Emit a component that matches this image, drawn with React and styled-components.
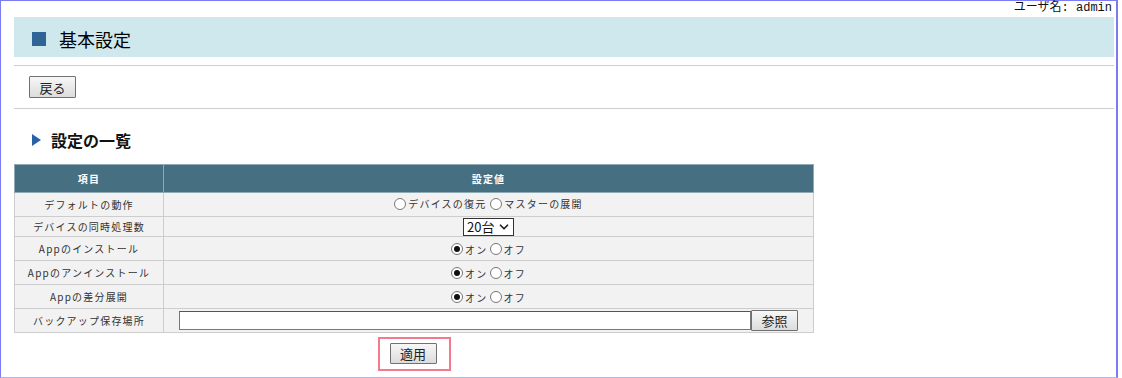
import styled, { createGlobalStyle } from "styled-components";
import { ChevronDown } from "lucide-react";

const GlobalStyle = createGlobalStyle`
  body {
    margin: 0;
    background: #fff;
    font-family: "Noto Sans CJK JP", "Noto Sans", sans-serif;
    color: #222;
  }
`;

const Frame = styled.div`
  box-sizing: border-box;
  width: 1118px;
  height: 378px;
  border-top: 1px solid #7b7bf3;
  border-left: 1px solid #7b7bf3;
  border-right: 2px solid #7b7bf3;
  border-bottom: 1px solid #b4b4f8;
  padding: 0 2px 0 13px;
`;

const UserBar = styled.div`
  height: 16px;
  text-align: right;
  padding-right: 2px;
  font-family: "Liberation Mono", "Noto Sans CJK JP", monospace;
  font-size: 12px;
  line-height: 14px;
  color: #111;
`;

const PageHeader = styled.div`
  height: 40px;
  background: #cfe8ee;
  display: flex;
  align-items: center;
  gap: 13px;
  padding-left: 18px;
  margin-bottom: 8px;
`;

const Square = styled.span`
  width: 14px;
  height: 14px;
  background: #2f6497;
  margin-top: 3px;
`;

const PageTitle = styled.h1`
  margin: 0;
  font-size: 18px;
  font-weight: normal;
  color: #000;
  line-height: 20px;
  margin-top: 4px;
`;

const Rule = styled.hr`
  margin: 0;
  border: 0;
  border-top: 1px solid #cfcfcf;
`;

const BackRow = styled.div`
  padding: 10px 0 10px 15px;
  display: flex;
`;

const Button = styled.button`
  box-sizing: border-box;
  width: 47px;
  height: ${(p) => p.$h || 22}px;
  padding: 0;
  border: 1px solid #707070;
  border-radius: 1px;
  background: linear-gradient(#f7f7f7, #dcdcdc);
  font-family: "Noto Sans CJK JP", sans-serif;
  font-size: 13px;
  line-height: 1;
  color: #222;
`;

const SectionTitle = styled.h2`
  display: flex;
  align-items: center;
  gap: 10px;
  margin: 21px 0 14px 18px;
  height: 20px;
  font-size: 16px;
  font-weight: bold;
  color: #111;
`;

const Triangle = styled.span`
  width: 0;
  height: 0;
  border-top: 6px solid transparent;
  border-bottom: 6px solid transparent;
  border-left: 9px solid #2a62a8;
`;

const Table = styled.table`
  width: 800px;
  border-collapse: collapse;
  font-size: 10px;
  letter-spacing: 1.2px;
  color: #333;
`;

const HeadCell = styled.th`
  height: 27px;
  padding: 0;
  background: #476f82;
  color: #fff;
  font-weight: bold;
  border: 1px solid #8fa9b5;
  width: ${(p) => p.$w || "auto"};
`;

const Row = styled.tr`
  height: ${(p) => p.$h}px;
`;

const Cell = styled.td`
  padding: 0;
  background: #f2f2f2;
  border: 1px solid #cdcdcd;
  text-align: center;
`;

const Options = styled.div`
  display: inline-flex;
  align-items: center;
  gap: ${(p) => p.$gap || 2}px;
`;

const OptionLabel = styled.label`
  display: inline-flex;
  align-items: center;
  gap: 2px;
`;

const Radio = styled.input.attrs({ type: "radio" })`
  appearance: none;
  box-sizing: border-box;
  width: 12px;
  height: 12px;
  margin: 0;
  border: 1px solid #777;
  border-radius: 50%;
  background: #fff;
  display: grid;
  place-items: center;
  &:checked::after {
    content: "";
    width: 6px;
    height: 6px;
    border-radius: 50%;
    background: #111;
  }
`;

const SelectBox = styled.div`
  position: relative;
  display: inline-block;
  vertical-align: middle;
`;

const Select = styled.select`
  appearance: none;
  box-sizing: border-box;
  width: 51px;
  height: 18px;
  margin: 0;
  padding: 0 0 0 3px;
  border: 1px solid #333;
  border-radius: 0;
  background: #fff;
  font-family: "Noto Sans CJK JP", sans-serif;
  font-size: 13px;
  line-height: 16px;
  color: #111;
  letter-spacing: 0;
`;

const SelectIcon = styled(ChevronDown)`
  position: absolute;
  right: 3px;
  top: 2px;
  pointer-events: none;
`;

const PathRow = styled.div`
  display: flex;
  align-items: center;
  padding: 0 15px;
`;

const PathInput = styled.input`
  flex: 1;
  box-sizing: border-box;
  height: 19px;
  margin: 0;
  border: 1px solid #777;
  border-top-color: #555;
  background: #fff;
`;

const ApplyRow = styled.div`
  width: 800px;
  display: flex;
  justify-content: center;
  padding-top: 4px;
`;

const Highlight = styled.div`
  border: 2px solid #f27a8c;
  padding: 4px 12px 5px 10px;
  display: flex;
`;

const OnOff = ({ name }) => (
  <Options>
    <OptionLabel>
      <Radio defaultChecked name={name} />
      オン
    </OptionLabel>
    <OptionLabel>
      <Radio name={name} />
      オフ
    </OptionLabel>
  </Options>
);

export default function App() {
  return (
    <>
      <GlobalStyle />
      <Frame>
        <UserBar>ユーザ名: admin</UserBar>
        <PageHeader>
          <Square />
          <PageTitle>基本設定</PageTitle>
        </PageHeader>
        <Rule />
        <BackRow>
          <Button>戻る</Button>
        </BackRow>
        <Rule />
        <SectionTitle>
          <Triangle />
          設定の一覧
        </SectionTitle>
        <Table>
          <thead>
            <tr>
              <HeadCell $w="148px">項目</HeadCell>
              <HeadCell>設定値</HeadCell>
            </tr>
          </thead>
          <tbody>
            <Row $h={24}>
              <Cell>デフォルトの動作</Cell>
              <Cell>
                <Options $gap={4}>
                  <OptionLabel>
                    <Radio name="mode" />
                    デバイスの復元
                  </OptionLabel>
                  <OptionLabel>
                    <Radio name="mode" />
                    マスターの展開
                  </OptionLabel>
                </Options>
              </Cell>
            </Row>
            <Row $h={20}>
              <Cell>デバイスの同時処理数</Cell>
              <Cell>
                <SelectBox>
                  <Select defaultValue="20">
                    <option value="20">20台</option>
                  </Select>
                  <SelectIcon size={14} strokeWidth={3} color="#222" />
                </SelectBox>
              </Cell>
            </Row>
            <Row $h={24}>
              <Cell>Appのインストール</Cell>
              <Cell>
                <OnOff name="install" />
              </Cell>
            </Row>
            <Row $h={24}>
              <Cell>Appのアンインストール</Cell>
              <Cell>
                <OnOff name="uninstall" />
              </Cell>
            </Row>
            <Row $h={24}>
              <Cell>Appの差分展開</Cell>
              <Cell>
                <OnOff name="diff" />
              </Cell>
            </Row>
            <Row $h={24}>
              <Cell>バックアップ保存場所</Cell>
              <Cell>
                <PathRow>
                  <PathInput type="text" />
                  <Button $h={21}>参照</Button>
                </PathRow>
              </Cell>
            </Row>
          </tbody>
        </Table>
        <ApplyRow>
          <Highlight>
            <Button $h={21}>適用</Button>
          </Highlight>
        </ApplyRow>
      </Frame>
    </>
  );
}
